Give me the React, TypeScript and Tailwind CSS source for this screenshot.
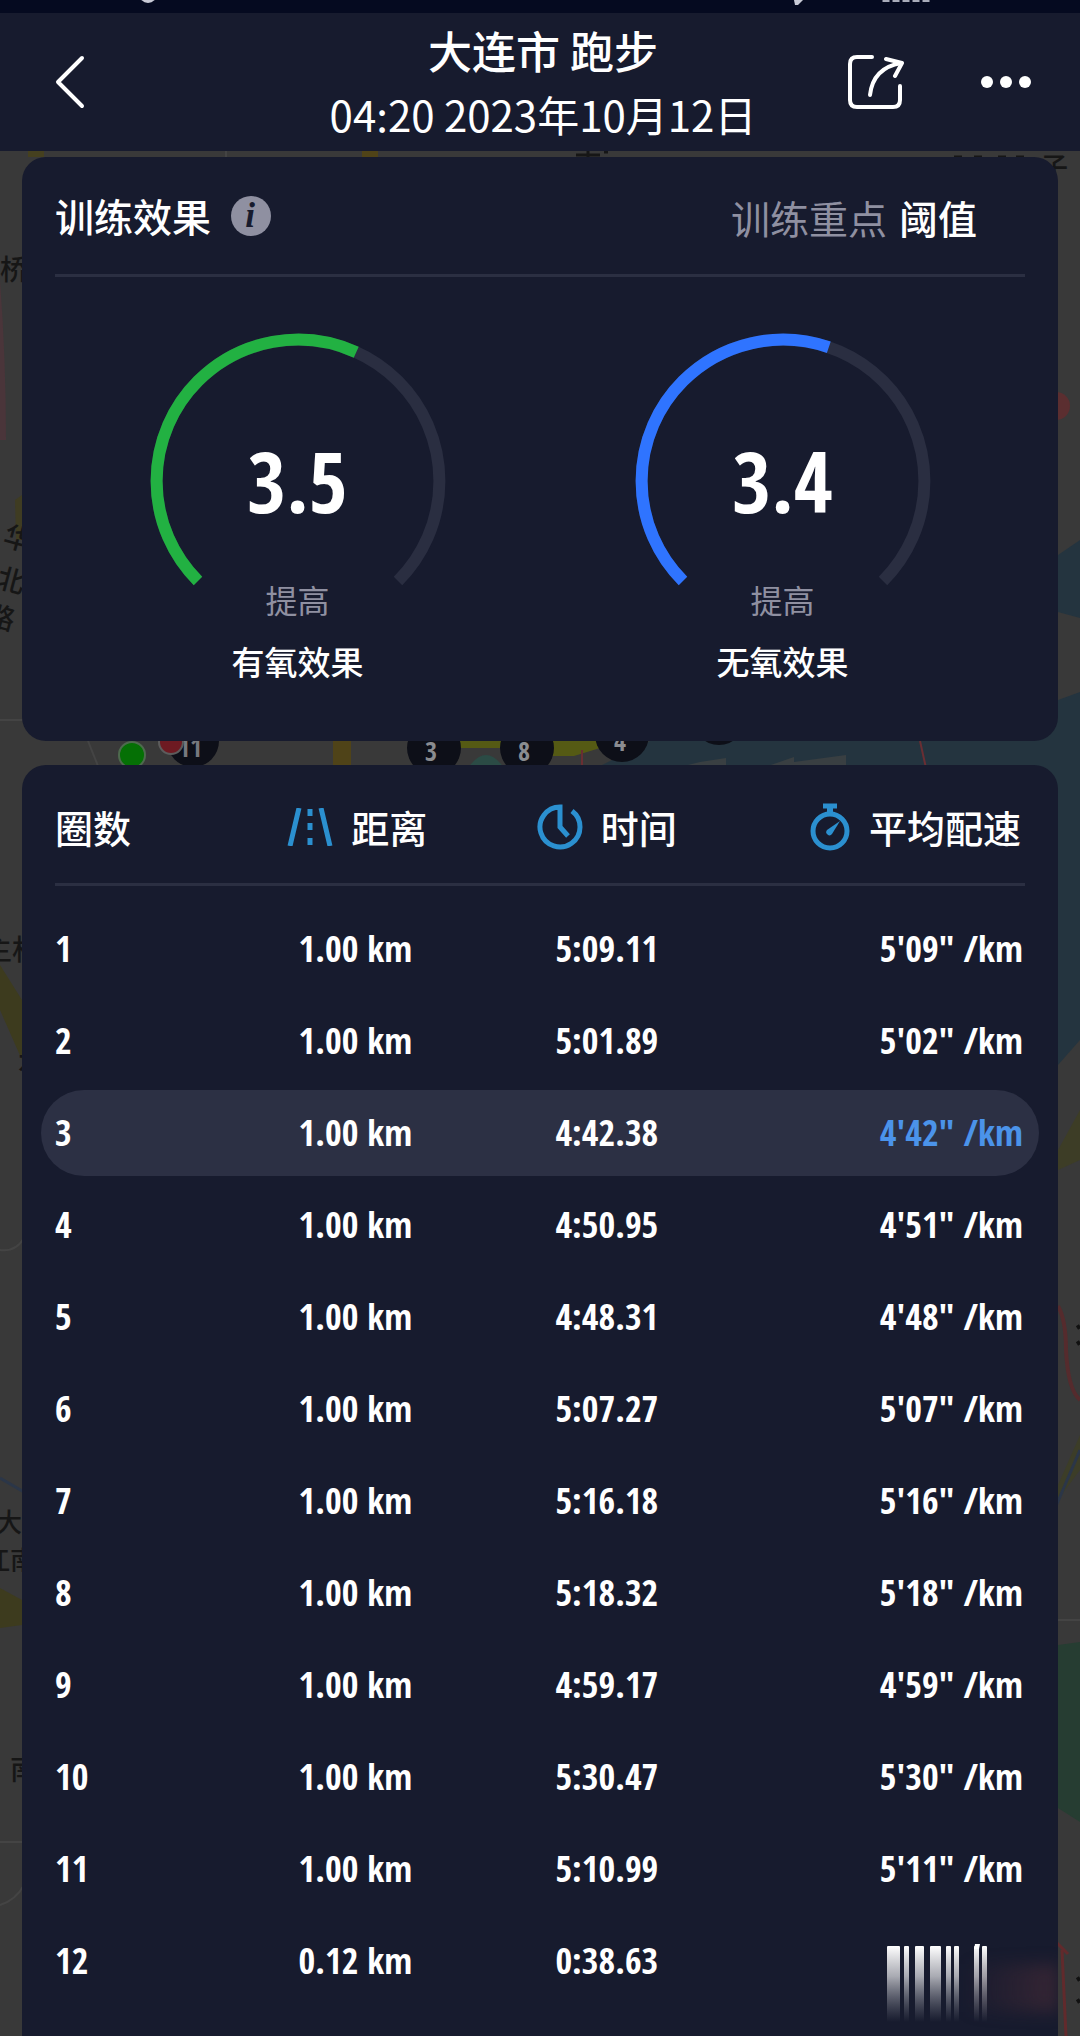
import React from 'react';

interface Lap {
  lap: number;
  distance: string;
  time: string;
  pace: string | null;
}

interface GaugeProps {
  value: string;
  percent: number;
  color: string;
  level: string;
  label: string;
}

const laps: Lap[] = [
  { lap: 1, distance: '1.00 km', time: '5:09.11', pace: `5'09"` },
  { lap: 2, distance: '1.00 km', time: '5:01.89', pace: `5'02"` },
  { lap: 3, distance: '1.00 km', time: '4:42.38', pace: `4'42"` },
  { lap: 4, distance: '1.00 km', time: '4:50.95', pace: `4'51"` },
  { lap: 5, distance: '1.00 km', time: '4:48.31', pace: `4'48"` },
  { lap: 6, distance: '1.00 km', time: '5:07.27', pace: `5'07"` },
  { lap: 7, distance: '1.00 km', time: '5:16.18', pace: `5'16"` },
  { lap: 8, distance: '1.00 km', time: '5:18.32', pace: `5'18"` },
  { lap: 9, distance: '1.00 km', time: '4:59.17', pace: `4'59"` },
  { lap: 10, distance: '1.00 km', time: '5:30.47', pace: `5'30"` },
  { lap: 11, distance: '1.00 km', time: '5:10.99', pace: `5'11"` },
  { lap: 12, distance: '0.12 km', time: '0:38.63', pace: null },
];

const FASTEST_LAP = 3;

function MapBackground() {
  return (
    <svg
      className="absolute inset-0 h-full w-full"
      viewBox="0 0 1080 2036"
      preserveAspectRatio="xMidYMin slice"
      aria-hidden="true"
    >
      <rect width="1080" height="2036" fill="#393939" />

      {/* water and parks */}
      <path d="M1058 555 L1080 540 V618 L1058 612 Z" fill="#24343f" />
      <path d="M600 766 L650 741 L1058 700 L1080 692 V1040 L1058 1065 V1000 L1040 780 H590 Z" fill="#24343f" />
      <path d="M684 766 L700 762 L726 758 V766 Z M768 766 L794 757 V762 L846 755 V766 Z" fill="#393f42" />
      <path d="M1058 1645 L1080 1642 V1822 L1058 1808 Z" fill="#263d32" />
      <path d="M1058 1150 L1080 1110 V1160 L1058 1170 Z" fill="#3d3d26" />
      <path d="M1058 1485 L1080 1435 V1470 L1058 1500 Z" fill="#3c3d28" />
      <path d="M0 965 L22 1000 V1060 L0 1010 Z" fill="#3d3b1e" />
      <path d="M0 1588 L22 1600 V1625 L0 1628 Z" fill="#3d3b1e" />
      <path d="M15 500 L22 495 V540 H16 Z" fill="#3f3c22" />
      <path d="M0 280 Q6 360 6 440 H0 Z" fill="#4a353a" />
      <circle cx="1056" cy="406" r="14" fill="#5b2e30" />

      {/* roads */}
      <rect x="333" y="741" width="18" height="28" fill="#4f4318" />
      <rect x="28" y="151" width="16" height="6" fill="#45401f" />
      <rect x="362" y="151" width="16" height="6" fill="#4f4318" />
      <path d="M460 741 H504 V748 H460 Z M552 741 H600 V748 L574 756 H552 Z" fill="#555a14" />
      <path d="M468 768 Q486 742 504 768 Z" fill="#2b4b45" />
      <path
        d="M0 720 H22 M88 741 L98 766 M0 1250 Q16 1252 24 1238 M0 1842 H22 M0 1905 Q16 1900 24 1885 M1058 1620 H1080 M226 151 V157"
        fill="none"
        stroke="#444"
        strokeWidth="2"
      />
      <path d="M920 741 L926 768 M582 750 V768" stroke="#6a2e33" strokeWidth="2" />
      <path d="M0 1478 L24 1492 M1056 1506 L1080 1450" stroke="#2b3648" strokeWidth="3" />
      <path d="M1058 1306 Q1066 1320 1066 1350 Q1068 1390 1080 1400" fill="none" stroke="#552b2d" strokeWidth="4" />
      <path d="M1062 1950 L1066 2036 M1056 1942 L1068 1954" stroke="#612a2c" strokeWidth="3" />

      <g className="font-['Noto_Sans_CJK_SC',sans-serif] font-medium" fill="#161616" fontSize="28">
        <text x="0" y="280">桥</text>
        <text x="2" y="547" transform="rotate(15 10 545)">华</text>
        <text x="-6" y="588" transform="rotate(15 0 590)">北</text>
        <text x="-16" y="626" transform="rotate(15 -6 628)">路</text>
        <text x="-16" y="960">主村</text>
        <text x="18" y="1072">水</text>
        <text x="-4" y="1532" fontSize="26">大</text>
        <text x="-16" y="1570" fontSize="26">江南</text>
        <text x="10" y="1780">南</text>
        <text x="1040" y="178">子</text>
      </g>
      <path d="M576 155 H600 M588 151 V157 M604 152 H608 M954 157 H962 M974 157 H982 M998 157 H1006 M1016 157 H1024" stroke="#161616" strokeWidth="3" />
      <path d="M1077 1328 L1080 1326 M1077 1344 L1080 1342 M1077 1980 L1080 1978 M1077 2002 L1080 2000" stroke="#111" strokeWidth="4" />

      {/* kilometre markers along the route */}
      <g className="font-['Open_Sans_Condensed',sans-serif]" fontSize="26" fontWeight="700" textAnchor="middle">
        <circle cx="193" cy="741" r="26" fill="#0d0f18" />
        <text x="190" y="757" fill="#77797e">11</text>
        <circle cx="434" cy="748" r="27" fill="#0d0f18" />
        <text x="431" y="761" fill="#8a8c90">3</text>
        <circle cx="527" cy="748" r="27" fill="#0d0f18" />
        <text x="524" y="761" fill="#8a8c90">8</text>
        <circle cx="622" cy="735" r="27" fill="#0d0f18" />
        <text x="620" y="751" fill="#8a8c90">4</text>
        <circle cx="719" cy="718" r="27" fill="#0d0f18" />
      </g>
      <circle cx="171" cy="742" r="12" fill="#6e1a22" stroke="#5c5c5c" strokeWidth="2" />
      <circle cx="132" cy="755" r="13" fill="#057005" stroke="#4e6a4e" strokeWidth="2" />
    </svg>
  );
}

function RoadIcon() {
  return (
    <svg width="46" height="38" viewBox="0 0 46 38" fill="none" stroke="#2b90d0" aria-hidden="true">
      <path d="M12 0 L3 38 M34 0 L43 38" strokeWidth="5" />
      <path d="M23 1 V8 M23 15 V22 M23 30 V37" strokeWidth="5" />
    </svg>
  );
}

function ClockIcon() {
  return (
    <svg width="46" height="46" viewBox="0 0 46 46" fill="none" stroke="#2b90d0" strokeWidth="5" aria-hidden="true">
      <path d="M35 7 A20 20 0 1 1 23 3 V23 L31 32" />
    </svg>
  );
}

function StopwatchIcon() {
  return (
    <svg width="42" height="48" viewBox="0 0 42 48" fill="none" stroke="#2b90d0" aria-hidden="true">
      <circle cx="21" cy="28" r="17" strokeWidth="5" />
      <path d="M14 3 H28" strokeWidth="5" />
      <path d="M21 3 V11" strokeWidth="6" />
      <path d="M31 18 L23 31 A3 3 0 0 1 18 27 Z" fill="#2b90d0" stroke="none" />
    </svg>
  );
}

// 270 degree dial, open at the bottom
function Gauge({ value, percent, color, level, label }: GaugeProps) {
  const arc = 'M48 248 A141.4 141.4 0 1 1 248 248';

  return (
    <div className="flex flex-col items-center">
      <div className="grid justify-items-center">
        <svg className="col-start-1 row-start-1" width="296" height="296" viewBox="0 0 296 296" fill="none" strokeWidth="12">
          <path d={arc} stroke="#2a2e41" />
          <path d={arc} stroke={color} pathLength={100} strokeDasharray={`${percent} 200`} />
        </svg>
        <span className="col-start-1 row-start-1 self-center font-['Open_Sans_Condensed','Roboto_Condensed',sans-serif] text-[84px] leading-none font-bold">
          {value}
        </span>
        <span className="col-start-1 row-start-1 self-end text-[32px] leading-[60px] text-[#8f90a1]">{level}</span>
      </div>
      <p className="mt-3 text-[33px] leading-10 font-medium">{label}</p>
    </div>
  );
}

function FadingPace() {
  const bars = [
    [0, 13],
    [17, 5],
    [28, 9],
    [43, 11],
    [59, 5],
    [67, 5],
    [87, 5],
    [95, 5],
  ];

  return (
    <div className="flex h-[86px] justify-end pt-7 pr-9">
      <svg className="overflow-visible" width="100" height="58" viewBox="0 0 100 58" aria-hidden="true">
        <defs>
          <linearGradient id="fade" x1="0" y1="0" x2="0" y2="76" gradientUnits="userSpaceOnUse">
            <stop offset="0" stopColor="#fff" />
            <stop offset="0.4" stopColor="#c3c4ca" stopOpacity="0.85" />
            <stop offset="1" stopColor="#8a8c98" stopOpacity="0" />
          </linearGradient>
        </defs>
        {bars.map(([x, width]) => (
          <rect key={x} x={x} y={0} width={width} height={76} rx={1} fill="url(#fade)" />
        ))}
        <path d="M88 -2 H93 L92 3 H87 Z" fill="#fff" />
      </svg>
    </div>
  );
}

function StatusBar() {
  return (
    <div className="relative h-[13px] bg-[#050a20]">
      <svg className="h-full w-full" viewBox="0 0 1080 13" preserveAspectRatio="xMidYMin slice" aria-hidden="true">
        <circle cx="148" cy="-6" r="9" fill="#c9cbd6" />
        <path d="M794 0 H803 L798 5 H795 Z" fill="#c9cbd6" />
        <path d="M886 0 V2 M896 0 V2 M906 0 V2 M916 0 V2 M926 0 V2" stroke="#a9acba" strokeWidth="7" />
      </svg>
    </div>
  );
}

function Header() {
  return (
    <header className="relative grid h-[138px] grid-cols-[1fr_auto_1fr] items-center bg-[#171b2e] pr-12 pl-[54px]">
      <button type="button" aria-label="返回" className="justify-self-start">
        <svg width="32" height="54" viewBox="0 0 32 54" fill="none" stroke="#fff" strokeWidth="4" strokeLinecap="round" strokeLinejoin="round">
          <path d="M28 3 L4 27 L28 51" />
        </svg>
      </button>
      <div className="text-center">
        <h1 className="text-[44px] leading-[64px] font-medium">大连市 跑步</h1>
        <p className="text-[42px] leading-[64px]">04:20 2023年10月12日</p>
      </div>
      <div className="flex items-center gap-[76px] justify-self-end">
        <button type="button" aria-label="分享">
          <svg width="56" height="56" viewBox="0 0 56 56" fill="none" stroke="#fff" strokeWidth="4" strokeLinecap="round" strokeLinejoin="round">
            <path d="M24 3 H9 Q2 3 2 10 V46 Q2 53 9 53 H45 Q52 53 52 46 V32" />
            <path d="M22 41 Q25 14 53 9" />
            <path d="M38 5 L54 9 L47 22" />
          </svg>
        </button>
        <button type="button" aria-label="更多">
          <svg width="52" height="14" viewBox="0 0 52 14" fill="#fff">
            <circle cx="7" cy="7" r="6" />
            <circle cx="26" cy="7" r="6" />
            <circle cx="45" cy="7" r="6" />
          </svg>
        </button>
      </div>
    </header>
  );
}

function TrainingEffect() {
  return (
    <section className="rounded-3xl bg-[#171b2e] px-[33px] pb-[60px]">
      <div className="flex h-[120px] items-center justify-between border-b-3 border-[#2b2f42] pr-12 text-[39px]">
        <div className="flex items-center gap-5">
          <h2 className="font-medium">训练效果</h2>
          <button type="button" aria-label="说明">
            <svg width="40" height="40" viewBox="0 0 40 40">
              <circle cx="20" cy="20" r="20" fill="#8f90a1" />
              <text
                x="19"
                y="31"
                textAnchor="middle"
                fontSize="35"
                fill="#171b2e"
                className="font-['Liberation_Serif',serif] font-bold italic"
              >
                i
              </text>
            </svg>
          </button>
        </div>
        <p className="flex gap-3 pt-1">
          <span className="text-[#8f90a1]">训练重点</span>
          <span className="font-medium">阈值</span>
        </p>
      </div>
      <div className="grid grid-cols-2 pt-14">
        <Gauge value="3.5" percent={59} color="#22b142" level="提高" label="有氧效果" />
        <Gauge value="3.4" percent={57} color="#2f74ff" level="提高" label="无氧效果" />
      </div>
    </section>
  );
}

function LapTable() {
  const headClass = 'flex h-[115px] items-center border-b-3 border-[#2b2f42]';

  return (
    <section className="relative flex-1 overflow-hidden rounded-t-3xl bg-[#171b2e] px-[19px]">
      <table className="w-full table-fixed border-separate border-spacing-x-0 border-spacing-y-[6px]">
        <colgroup>
          <col className="w-[18%]" />
          <col className="w-[27%]" />
          <col className="w-[23%]" />
          <col className="w-[32%]" />
        </colgroup>
        <thead className="text-[38px] leading-none">
          <tr>
            <th scope="col" className="p-0 pb-[14px] pl-[14px] font-medium">
              <div className={headClass}>圈数</div>
            </th>
            <th scope="col" className="p-0 pb-[14px] font-medium">
              <div className={`${headClass} justify-center gap-[18px] pl-1`}>
                <RoadIcon />
                距离
              </div>
            </th>
            <th scope="col" className="p-0 pb-[14px] font-medium">
              <div className={`${headClass} justify-center gap-[18px] pl-1`}>
                <ClockIcon />
                时间
              </div>
            </th>
            <th scope="col" className="p-0 pr-[14px] pb-[14px] font-medium">
              <div className={`${headClass} justify-end gap-[18px] pr-1`}>
                <StopwatchIcon />
                平均配速
              </div>
            </th>
          </tr>
        </thead>
        <tbody className="font-['Open_Sans_Condensed','Roboto_Condensed',sans-serif] text-4xl font-bold">
          {laps.map((item) => {
            const fastest = item.lap === FASTEST_LAP;
            return (
              <tr key={item.lap} className={fastest ? '[&>td]:bg-[#2c3044]' : ''}>
                <td className="h-[86px] rounded-l-full p-0 pl-[14px]">{item.lap}</td>
                <td className="p-0 text-center">{item.distance}</td>
                <td className="p-0 pl-1 text-center">{item.time}</td>
                <td className={`rounded-r-full p-0 pr-4 text-right ${fastest ? 'text-[#4b93ea]' : ''}`}>
                  {item.pace ? `${item.pace} /km` : <FadingPace />}
                </td>
              </tr>
            );
          })}
        </tbody>
      </table>
      <div className="absolute right-0 bottom-6 h-12 w-24 bg-linear-to-r from-transparent to-[#55303a]/50 blur-sm" />
    </section>
  );
}

export default function App() {
  return (
    <div className="relative flex min-h-screen flex-col overflow-hidden bg-[#393939] font-['Noto_Sans_CJK_SC',sans-serif] text-white">
      <MapBackground />
      <StatusBar />
      <Header />
      <main className="relative flex flex-1 flex-col gap-6 px-[22px] pt-[6px]">
        <TrainingEffect />
        <LapTable />
      </main>
    </div>
  );
}
